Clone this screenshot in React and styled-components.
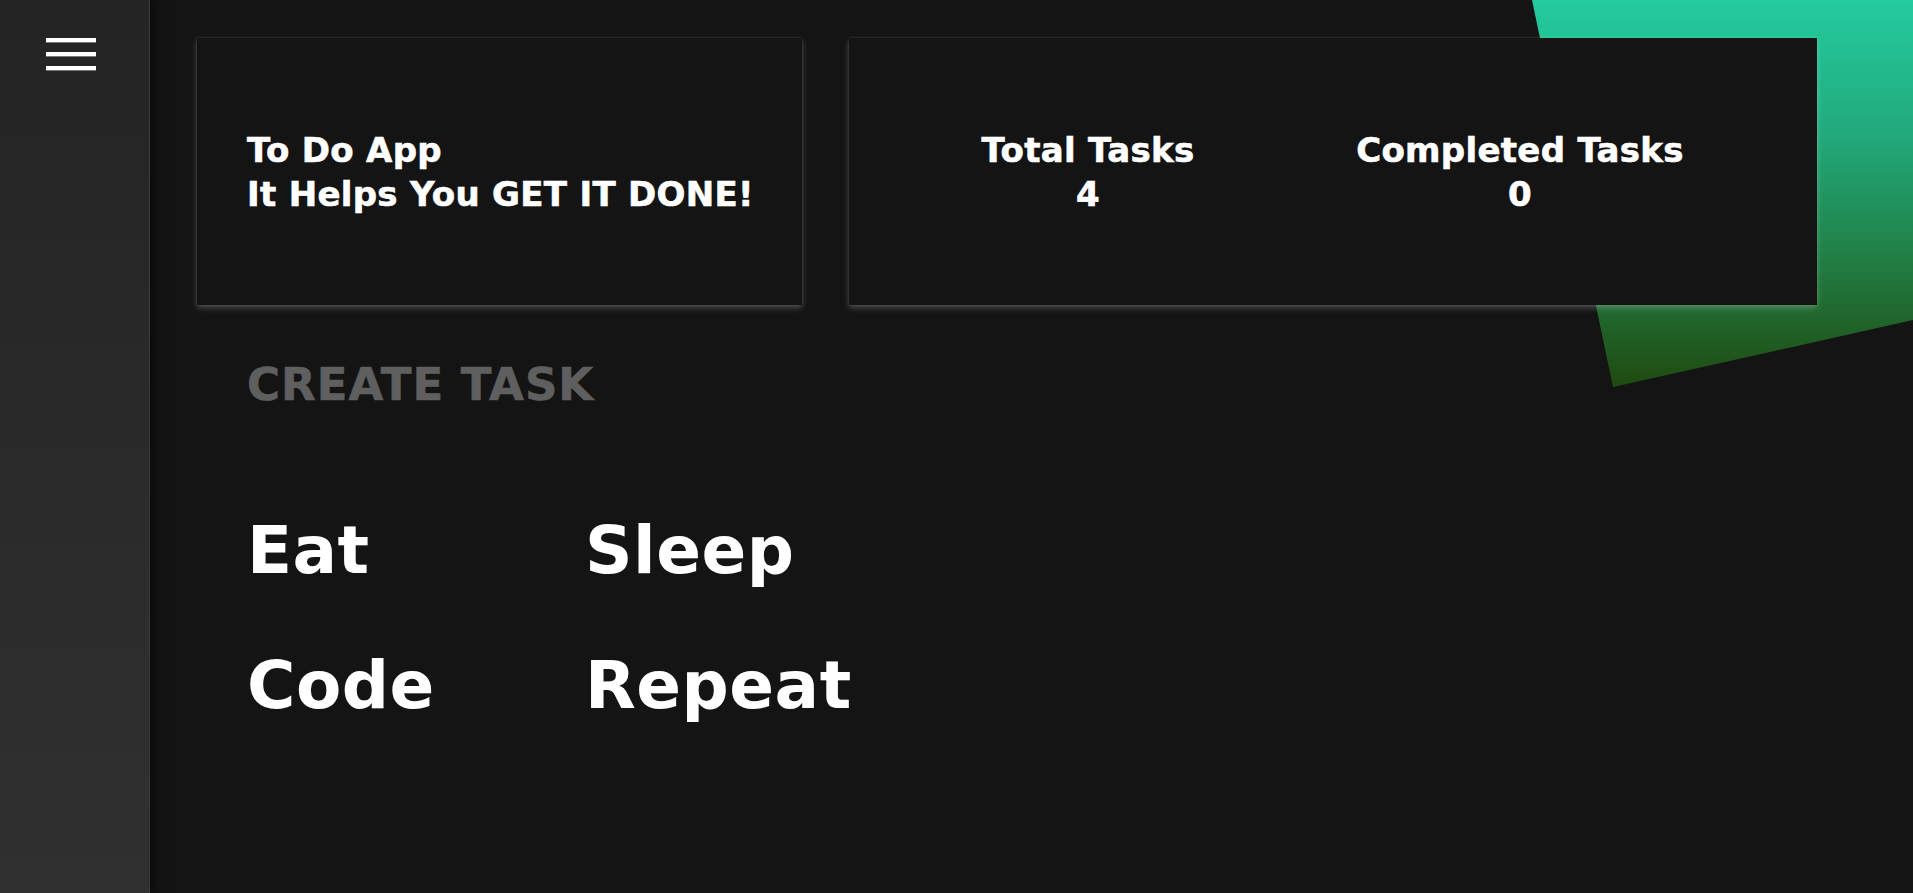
import React from 'react';
import styled, { createGlobalStyle } from 'styled-components';

const GlobalStyle = createGlobalStyle`
  * {
    box-sizing: border-box;
  }
  html, body {
    margin: 0;
    padding: 0;
    background-color: #141414;
    font-family: "DejaVu Sans", "Liberation Sans", sans-serif;
    overflow: hidden;
  }
`;

const Layout = styled.div`
  position: relative;
  display: flex;
  flex-direction: row;
  width: 100%;
  height: 100vh;
  background-color: #141414;
  overflow: hidden;
`;

const Decoration = styled.div`
  position: absolute;
  top: 0;
  right: 0;
  width: 381px;
  height: 387px;
  background: linear-gradient(to bottom, #23cb9e 0%, #22a97c 35%, #218147 65%, #1f4a10 100%);
  clip-path: polygon(0 0, 100% 0, 100% 320px, 81px 100%);
  z-index: 0;
`;

const Sidebar = styled.nav`
  flex: 0 0 150px;
  height: 100%;
  padding: 38px 0 0 46px;
  background: linear-gradient(to bottom, #242424, #303030);
  border-right: 1px solid #3a3a3a;
  box-shadow: 3px 0 12px rgba(0, 0, 0, 0.6);
  z-index: 2;
`;

const MenuButton = styled.button`
  display: flex;
  flex-direction: column;
  gap: 10px;
  padding: 0;
  border: none;
  background: transparent;
  cursor: pointer;

  span {
    display: block;
    width: 50px;
    height: 4px;
    background-color: #ffffff;
    box-shadow: 0 1px 0 #777777;
  }
`;

const Main = styled.main`
  position: relative;
  flex: 1;
  padding: 38px 0 0 47px;
  z-index: 1;
`;

const CardRow = styled.div`
  display: grid;
  grid-template-columns: 605px 968px;
  gap: 47px;
`;

const Card = styled.section`
  display: grid;
  grid-template-columns: ${(props) => (props.$stats ? '432px 432px' : '1fr')};
  align-items: center;
  justify-items: ${(props) => (props.$stats ? 'center' : 'start')};
  height: 267px;
  padding-left: ${(props) => (props.$stats ? '23px' : '50px')};
  background-color: #141414;
  box-shadow: 0 3px 6px rgba(255, 255, 255, 0.22), 0 0 3px rgba(255, 255, 255, 0.12);
  color: #ffffff;
`;

const CardText = styled.div`
  font-size: 34px;
  font-weight: 700;
  line-height: 44px;
  letter-spacing: 0.3px;
  -webkit-text-stroke: 0.6px currentColor;
  text-align: ${(props) => (props.$center ? 'center' : 'left')};
  white-space: nowrap;
`;

const Section = styled.div`
  padding-left: 50px;
`;

const SectionTitle = styled.h2`
  margin: 54px 0 0;
  font-size: 45px;
  font-weight: 700;
  line-height: 52px;
  letter-spacing: 1px;
  -webkit-text-stroke: 0.6px currentColor;
  color: #5f5f5f;
`;

const TaskGrid = styled.ul`
  display: grid;
  grid-template-columns: 338px auto;
  row-gap: 55px;
  margin: 100px 0 0;
  padding: 0;
  list-style: none;
`;

const Task = styled.li`
  font-size: 66px;
  font-weight: 700;
  line-height: 80px;
  letter-spacing: 0.5px;
  color: #ffffff;
`;

const tasks = ['Eat', 'Sleep', 'Code', 'Repeat'];

const App = () => {
  const completed = 0;

  return (
    <>
      <GlobalStyle />
      <Layout>
        <Decoration />
        <Sidebar>
          <MenuButton aria-label="menu">
            <span />
            <span />
            <span />
          </MenuButton>
        </Sidebar>
        <Main>
          <CardRow>
            <Card>
              <CardText>
                To Do App
                <br />
                It Helps You GET IT DONE!
              </CardText>
            </Card>
            <Card $stats>
              <CardText $center>
                Total Tasks
                <br />
                {tasks.length}
              </CardText>
              <CardText $center>
                Completed Tasks
                <br />
                {completed}
              </CardText>
            </Card>
          </CardRow>
          <Section>
            <SectionTitle>CREATE TASK</SectionTitle>
            <TaskGrid>
              {tasks.map((task) => (
                <Task key={task}>{task}</Task>
              ))}
            </TaskGrid>
          </Section>
        </Main>
      </Layout>
    </>
  );
};

export default App;
